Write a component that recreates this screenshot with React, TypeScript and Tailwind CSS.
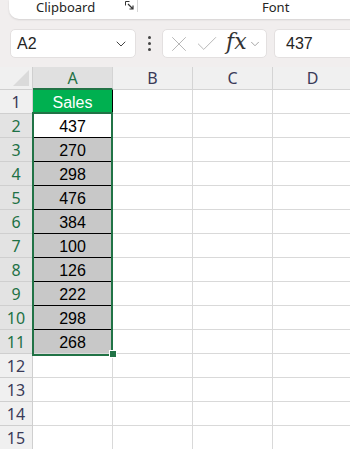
import { ChevronDown, X, Check } from "lucide-react";

const values = [437, 270, 298, 476, 384, 100, 126, 222, 298, 268];
const cols = ["A", "B", "C", "D"];

const RowHead: React.FC<{ n: number; active?: boolean }> = ({ n, active }) => (
  <div
    className={`w-[33px] shrink-0 h-full flex items-center justify-center border-r border-b border-[#cfcfcf] text-[16px] ${
      active ? "bg-[#e3e3e3] text-[#1e7145]" : "bg-[#f0f0f0] text-[#3a3a58]"
    }`}
  >
    {n}
  </div>
);

const App: React.FC = () => {
  const rows = Array.from({ length: 15 }, (_, i) => i + 1);

  return (
    <div className="w-[350px] h-[449px] overflow-hidden bg-[#f1eeee] font-['Noto_Sans',sans-serif] text-[#242424]">
      {/* ribbon bottom */}
      <div className="h-[19px] pl-[9px]">
        <div className="h-full w-[400px] bg-white rounded-bl-[10px] shadow-[0_1px_2px_rgba(0,0,0,0.12)] flex items-start text-[13px] leading-[14px]">
          <div className="w-[128px] shrink-0 flex items-start">
            <span className="ml-[27px]">Clipboard</span>
            <svg className="ml-[30px] mt-[1px]" width="10" height="10" viewBox="0 0 10 10">
              <path d="M0.5 0.5h4M0.5 0.5v4" stroke="#333" strokeWidth="1" fill="none" />
              <path d="M3 3l5 5M8 4.5v3.5h-3.5" stroke="#333" strokeWidth="1.2" fill="none" />
            </svg>
          </div>
          <div className="w-px h-[12px] bg-[#d6d6d6]" />
          <div className="pl-[124px]">Font</div>
        </div>
      </div>

      {/* formula bar */}
      <div className="mt-[10px] h-[29px] flex items-stretch">
        <div className="ml-[10px] w-[126px] shrink-0 bg-white rounded-[5px] border border-[#e3e0e0] flex items-center pl-[6px] pr-[6px] text-[16px]">
          <span className="flex-1 font-['Liberation_Sans',sans-serif]">A2</span>
          <ChevronDown size={16} strokeWidth={1.5} className="text-[#444]" />
        </div>
        <div className="w-[26px] shrink-0 flex flex-col items-center justify-center gap-[3px]">
          <div className="w-[3px] h-[3px] rounded-full bg-[#444]" />
          <div className="w-[3px] h-[3px] rounded-full bg-[#444]" />
          <div className="w-[3px] h-[3px] rounded-full bg-[#444]" />
        </div>
        <div className="w-[105px] shrink-0 bg-white rounded-[5px] border border-[#e3e0e0] flex items-center pl-[3px]">
          <X size={26} strokeWidth={0.9} className="text-[#b5b5b5]" />
          <Check size={26} strokeWidth={0.9} className="text-[#b5b5b5] ml-[2px]" />
          <span className="ml-[6px] font-['DejaVu_Serif',serif] italic text-[22px] leading-none text-[#333] -mt-[3px]">
            fx
          </span>
          <ChevronDown size={14} strokeWidth={1.3} className="text-[#8a8a8a] ml-[1px]" />
        </div>
        <div className="ml-[7px] w-[100px] shrink-0 bg-white rounded-l-[5px] border border-r-0 border-[#e3e0e0] flex items-center pl-[11px] text-[16px] font-['Liberation_Sans',sans-serif]">
          437
        </div>
      </div>

      {/* grid */}
      <div className="mt-[9px] relative bg-white w-[353px]">
        <div className="h-[23px] flex bg-[#f0f0f0] text-[16px]">
          <div className="w-[33px] shrink-0 h-full border-r border-b border-[#cfcfcf] flex items-end justify-end p-[3px]">
            <svg width="16" height="16" viewBox="0 0 16 16">
              <path d="M16 0V16H0Z" fill="#dadada" />
            </svg>
          </div>
          {cols.map((c) => (
            <div
              key={c}
              className={`w-[80px] shrink-0 h-full flex items-center justify-center border-r border-b border-[#d4d4d4] ${
                c === "A" ? "bg-[#e0e0e0] text-[#1e7145] border-b-2 border-b-[#217346]" : "text-[#3a3a58]"
              }`}
            >
              {c}
            </div>
          ))}
        </div>

        {rows.map((r) => {
          const inSel = r >= 2 && r <= 11;
          return (
            <div key={r} className="h-[24px] flex">
              <RowHead n={r} active={inSel} />
              {r === 1 ? (
                <div className="w-[80px] shrink-0 pt-[2px] bg-[#00b050] text-white border-r border-b border-black flex items-center justify-center font-['Liberation_Sans',sans-serif] text-[16px]">
                  Sales
                </div>
              ) : inSel ? (
                <div
                  className={`w-[80px] shrink-0 pt-[2px] border-r border-b flex items-center justify-center font-['Liberation_Sans',sans-serif] text-[16px] text-black ${
                    r === 2 ? "bg-white" : "bg-[#c8c8c8]"
                  } ${r === 11 ? "border-[#d9d9d9]" : "border-black"}`}
                >
                  {values[r - 2]}
                </div>
              ) : (
                <div className="w-[80px] shrink-0 border-r border-b border-[#d9d9d9]" />
              )}
              <div className="w-[80px] shrink-0 border-r border-b border-[#d9d9d9]" />
              <div className="w-[80px] shrink-0 border-r border-b border-[#d9d9d9]" />
              <div className="w-[80px] shrink-0 border-b border-[#d9d9d9]" />
            </div>
          );
        })}

        {/* selection outline */}
        <div className="absolute left-[32px] top-[45px] w-[81px] h-[244px] border-2 border-[#217346]" />
        <div className="absolute left-[109px] top-[283px] w-[6px] h-[6px] bg-[#217346] border border-white box-content" />
      </div>
    </div>
  );
};

export default App;
